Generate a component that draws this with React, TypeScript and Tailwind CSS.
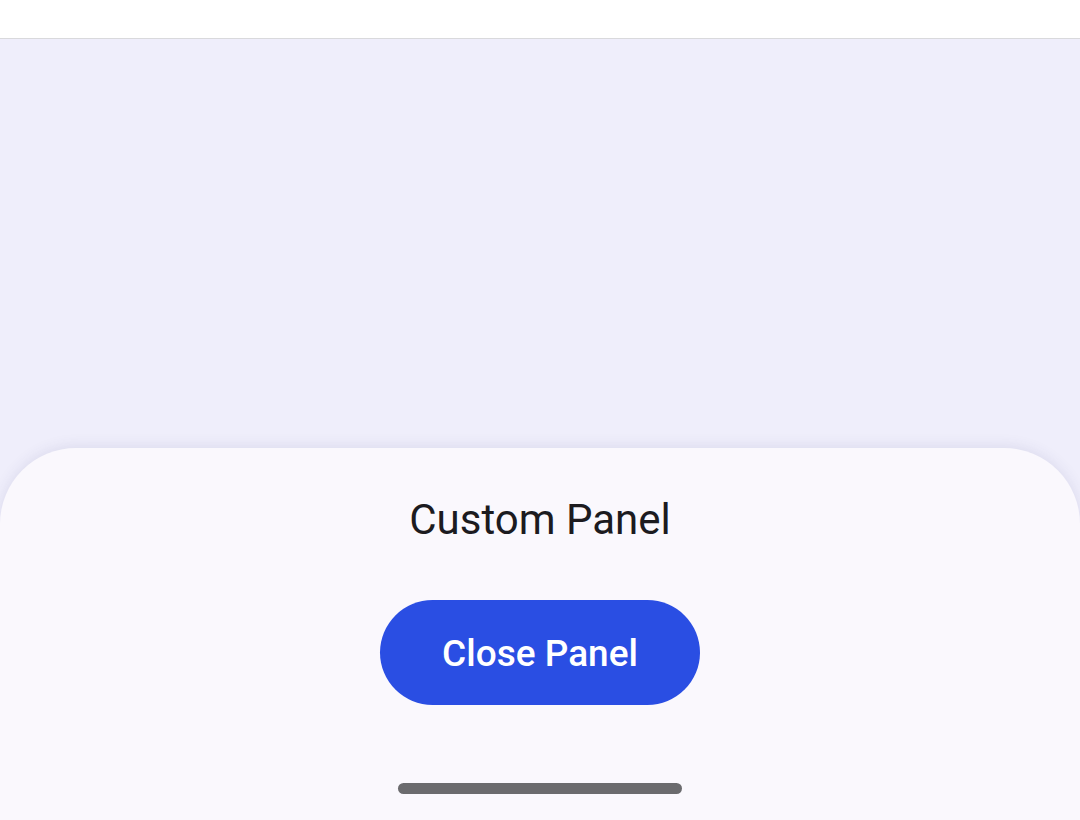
export default function App() {
  return (
    <div className="flex h-[820px] w-[1080px] flex-col overflow-hidden bg-[#efeefb]" style={{ fontFamily: 'Roboto, "Noto Sans", sans-serif' }}>
      {/* top bar */}
      <div className="h-[39px] shrink-0 border-b border-[#d9d9dc] bg-white" />

      {/* empty content area */}
      <div className="flex-1" />

      {/* bottom panel */}
      <div className="flex h-[372px] shrink-0 flex-col items-center rounded-t-[76px] bg-[#faf8fd] shadow-[0_-2px_14px_rgba(60,60,120,0.10)]">
        <h2 className="mt-[47px] text-[42px] leading-[50px] text-[#1c1b1f]">Custom Panel</h2>
        <button className="mt-[55px] h-[105px] w-[320px] rounded-full bg-[#2a4ee3] pt-[3px] text-[37px] font-medium text-white">
          Close Panel
        </button>
        <div className="mt-[78px] h-[11px] w-[284px] rounded-full bg-[#6b6b6e]" />
      </div>
    </div>
  );
}
